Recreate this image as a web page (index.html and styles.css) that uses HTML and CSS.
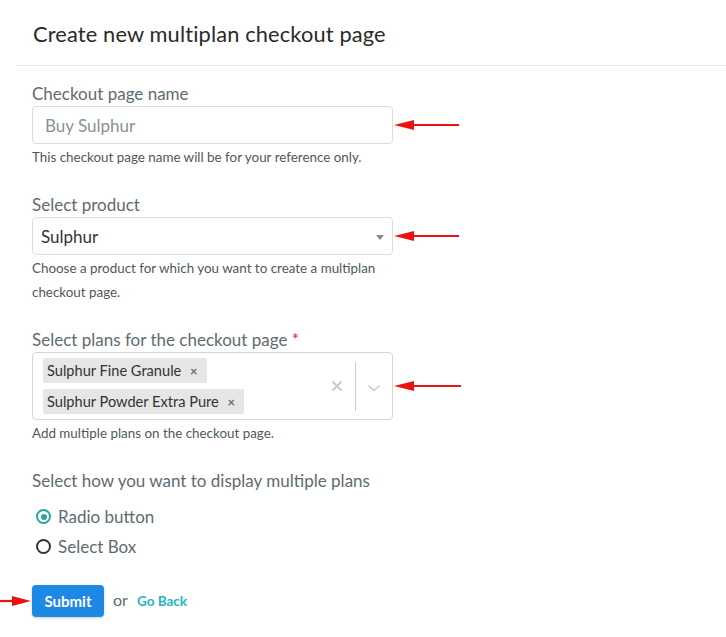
FILE: index.html
```html
<!DOCTYPE html>
<html>
<head>
<meta charset="utf-8">
<link rel="stylesheet" href="styles.css">
</head>
<body>
<div class="page">
  <div class="header"><h1 class="title">Create new multiplan checkout page</h1></div>
  <form class="form">
    <div class="field">
      <label class="label">Checkout page name</label>
      <div class="control-row">
        <div class="input placeholder">Buy Sulphur</div>
        <svg class="arrow-left" width="68" height="12" viewBox="0 0 68 12"><path d="M20 6 H66" stroke="#ee1111" stroke-width="2.2"/><path d="M1 6 L21 1 L21 11 Z" fill="#ee1111"/></svg>
      </div>
      <p class="help">This checkout page name will be for your reference only.</p>
    </div>
    <div class="field f2">
      <label class="label">Select product</label>
      <div class="control-row">
        <div class="input select"><span class="value">Sulphur</span><span class="caret"></span></div>
        <svg class="arrow-left" width="68" height="12" viewBox="0 0 68 12"><path d="M20 6 H66" stroke="#ee1111" stroke-width="2.2"/><path d="M1 6 L21 1 L21 11 Z" fill="#ee1111"/></svg>
      </div>
      <p class="help help-tall">Choose a product for which you want to create a multiplan checkout page.</p>
    </div>
    <div class="field f3">
      <label class="label">Select plans for the checkout page <span class="req">*</span></label>
      <div class="control-row">
        <div class="multi">
          <div class="tags">
            <span class="tag">Sulphur Fine Granule <span class="tag-x">×</span></span>
            <span class="tag">Sulphur Powder Extra Pure <span class="tag-x">×</span></span>
          </div>
          <div class="indicators">
            <svg class="clear" width="12" height="12" viewBox="0 0 12 12"><path d="M1.5 1.5 L10.5 10.5 M10.5 1.5 L1.5 10.5" stroke="#cccccc" stroke-width="2"/></svg>
            <span class="sep"></span>
            <svg class="chev" width="14" height="8" viewBox="0 0 14 8"><path d="M1.5 1.5 L7 6.5 L12.5 1.5" fill="none" stroke="#cccccc" stroke-width="1.6"/></svg>
          </div>
        </div>
        <svg class="arrow-left a3" width="70" height="12" viewBox="0 0 70 12"><path d="M20 6 H68" stroke="#ee1111" stroke-width="2.2"/><path d="M1 6 L21 1 L21 11 Z" fill="#ee1111"/></svg>
      </div>
      <p class="help">Add multiple plans on the checkout page.</p>
    </div>
    <div class="field f4">
      <label class="label">Select how you want to display multiple plans</label>
      <div class="radios">
        <div class="radio"><span class="dot on"></span>Radio button</div>
        <div class="radio"><span class="dot"></span>Select Box</div>
      </div>
    </div>
    <div class="actions">
      <svg class="arrow-right" width="32" height="12" viewBox="0 0 32 12"><path d="M0 6 H14" stroke="#ee1111" stroke-width="2.2"/><path d="M31 6 L12 1 L12 11 Z" fill="#ee1111"/></svg>
      <span class="btn">Submit</span>
      <span class="or">or</span>
      <a class="back">Go Back</a>
    </div>
  </form>
</div>
</body>
</html>
```
FILE: styles.css
```css
* { box-sizing: border-box; }
html, body { margin: 0; padding: 0; background: #fff; }
body { font-family: Lato, "Open Sans", Arial, sans-serif; color: #5b6770; }
.page { width: 726px; height: 637px; overflow: hidden; }
.header { margin-left: 17px; height: 66px; border-bottom: 1px solid #e6e6e6; padding: 21px 0 0 16px; }
.title { margin: 0; font-size: 21.8px; font-weight: 400; color: #2a2a2a; line-height: 26px; letter-spacing: 0.15px; }
.form { padding: 19px 0 0 32px; }
.field { display: flex; flex-direction: column; }
.label { font-size: 17px; line-height: 18px; color: #5f6b72; margin-bottom: 3px; }
.req { color: #d0312d; }
.control-row { position: relative; width: 361px; }
.input { width: 361px; height: 38px; border: 1px solid #dcdcdc; border-radius: 4px; font-size: 17px; display: flex; align-items: center; }
.placeholder { color: #8a9298; padding-left: 12px; }
.select { padding-left: 8px; color: #333; justify-content: space-between; padding-right: 8px; }
.caret { width: 0; height: 0; border-left: 4px solid transparent; border-right: 4px solid transparent; border-top: 5px solid #888; margin-top: 2px; }
.arrow-left { position: absolute; left: 361px; top: 13px; }
.arrow-left.a3 { top: 28px; }
.help { margin: 6px 0 0; font-size: 13.4px; line-height: 14px; color: #50585e; }
.help-tall { line-height: 24px; width: 360px; margin-top: 1px; }
.f2 { margin-top: 32px; }
.f3 { margin-top: 27px; }
.f4 { margin-top: 32px; }
.multi { width: 361px; height: 68px; border: 1px solid #d5d5d5; border-radius: 4px; display: flex; align-items: center; justify-content: space-between; padding-left: 10px; }
.tags { display: flex; flex-direction: column; align-items: flex-start; gap: 6px; }
.tag { background: #e6e6e6; border-radius: 2px; height: 25px; display: flex; align-items: center; padding: 0 9px 0 4px; font-size: 14.6px; color: #333; white-space: pre; }
.tag-x { font-size: 13px; color: #687078; margin-left: 5px; font-weight: 700; }
.indicators { display: flex; align-items: center; height: 100%; }
.clear { margin-right: 12px; }
.sep { width: 1px; height: 49px; background: #cccccc; }
.chev { margin: 3px 11px 0 11px; }
.radios { display: flex; flex-direction: column; gap: 11px; margin-top: 14px; padding-left: 4px; }
.radio { display: flex; align-items: center; font-size: 17px; color: #5f6b72; line-height: 19px; }
.dot { width: 15px; height: 15px; border: 2px solid #333; border-radius: 50%; margin-right: 7px; position: relative; }
.dot.on { border-color: #26a69a; }
.dot.on::after { content: ""; position: absolute; left: 2.5px; top: 2.5px; width: 6px; height: 6px; border-radius: 50%; background: #26a69a; }
.actions { position: relative; display: flex; align-items: center; margin-top: 29px; }
.arrow-right { position: absolute; left: -32px; top: 10px; }
.btn { background: #1e88e5; color: #fff; font-size: 15px; font-weight: 700; height: 32px; width: 72px; border-radius: 4px; display: flex; align-items: center; justify-content: center; box-shadow: 0 1px 3px rgba(0,0,0,0.2); }
.or { font-size: 16px; color: #5f6b72; margin-left: 9px; margin-top: -4px; }
.back { font-size: 13.5px; font-weight: 700; color: #1fb5c4; margin-left: 9px; }
```
